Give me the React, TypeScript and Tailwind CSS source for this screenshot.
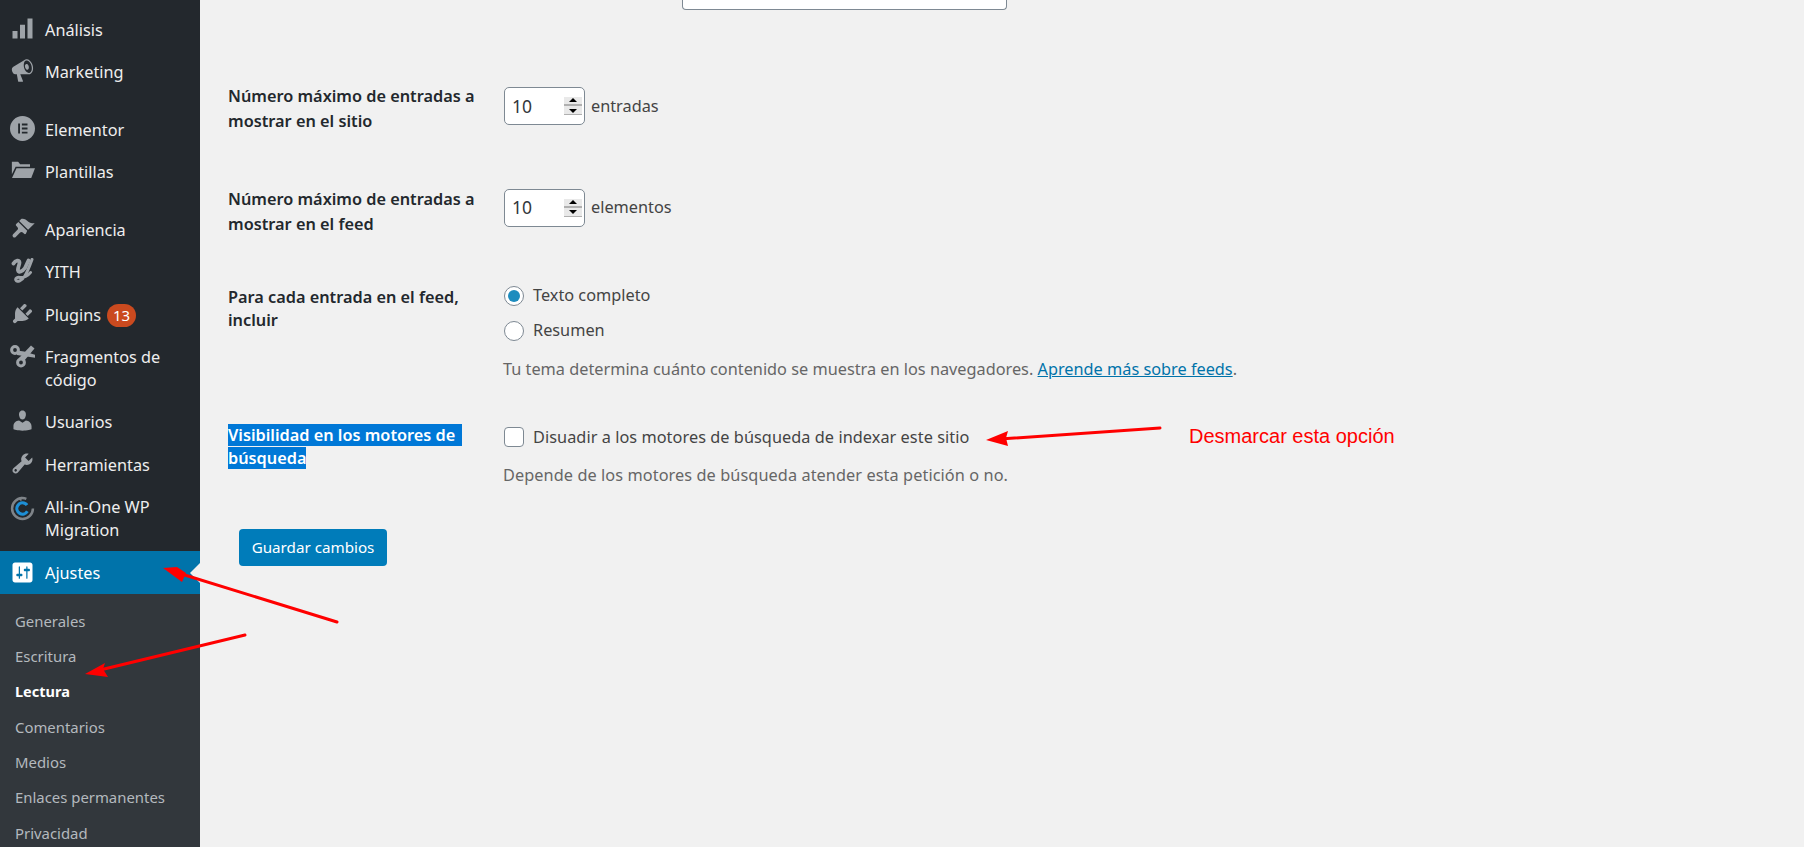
import React from "react";

const ICON = "#9ea3a8";

function Dash({ d, fill = ICON }: { d: string; fill?: string }) {
  return (
    <svg viewBox="0 0 20 20" className="w-[25px] h-[25px]" fill={fill}>
      <path d={d} />
    </svg>
  );
}

const icons: Record<string, React.ReactNode> = {
  chart: <Dash d="M18 18V2h-4v16h4zm-6 0V7H8v11h4zm-6 0v-6H2v6h4z" />,
  megaphone: (
    <Dash d="M18.15 5.94c.46 1.62.38 3.22-.02 4.48-.42 1.28-1.26 2.18-2.3 2.48-.16.06-.26.06-.4.06-.06.02-.12.02-.18.02-.06.02-.14.02-.22.02h-6.8l2.22 5.5c.02.14-.06.26-.14.34-.08.1-.24.16-.34.16H6.95c-.1 0-.26-.06-.34-.16-.08-.08-.16-.2-.14-.34l-1-5.5H4.25l-.02-.02c-.5.06-1.08-.18-1.54-.62s-.88-1.08-1.06-1.88c-.24-.8-.2-1.56-.02-2.2.2-.62.58-1.08 1.06-1.3l.02-.02 9-5.4c.1-.06.18-.1.24-.16.06-.04.14-.08.24-.12.16-.08.28-.12.5-.18 1.04-.3 2.24.1 3.22 1s1.84 2.24 2.26 3.86zm-2.58 5.98h-.02c.4-.1.74-.34 1.04-.7.58-.7.86-1.76.86-3.04 0-.64-.1-1.3-.28-1.98-.34-1.36-1.02-2.5-1.78-3.24s-1.68-1.1-2.46-.88c-.82.22-1.4.96-1.7 2-.32 1.04-.28 2.36.06 3.72.38 1.36 1 2.5 1.8 3.24.78.74 1.62 1.1 2.48.88zm-2.54-7.08c.22-.04.42-.02.62.04.38.16.76.48 1.02 1s.42 1.2.42 1.78c0 .3-.04.56-.12.8-.18.48-.44.84-.86.94-.34.1-.8-.06-1.14-.4-.34-.32-.66-.86-.84-1.48-.4-1.24-.16-2.42.9-2.68z" />
  ),
  elementor: (
    <svg viewBox="0 0 20 20" className="w-[25px] h-[25px]" fill={ICON}>
      <path
        fillRule="evenodd"
        d="M10 0a10 10 0 1 0 0 20a10 10 0 0 0 0-20ZM6.5 6H8v8H6.5ZM9.5 6H14v1.5H9.5ZM9.5 9.25H14v1.5H9.5ZM9.5 12.5H14V14H9.5Z"
      />
    </svg>
  ),
  folder: (
    <svg viewBox="0 0 20 20" className="w-[25px] h-[25px]" fill={ICON}>
      <path d="M1.5 3h5l1.6 2H16v2H4.5L1.5 13Z" />
      <path d="M5.2 8.2H20l-3 7.8H1.6Z" />
    </svg>
  ),
  brush: (
    <Dash d="M14.48 11.06L7.41 3.99l1.5-1.5c.5-.56 2.3-.47 3.51.32 1.21.8 1.43 1.28 2.91 2.1 1.18.64 2.45 1.26 4.45.85zm-.71.71L6.7 4.7 4.93 6.47c-.39.39-.39 1.02 0 1.41l1.06 1.06c.59.6.59 1.56 0 2.12l-3.53 3.53c-.6.59-.6 1.55 0 2.12.59.6 1.56.6 2.12 0l3.53-3.53c.59-.59 1.53-.59 2.12 0l1.06 1.06c.39.39 1.02.39 1.41 0z" />
  ),
  yith: (
    <svg viewBox="0 0 25 25" className="w-[25px] h-[25px]" fill="none" stroke={ICON} strokeLinecap="round">
      <path d="M3.5 5.5C5.5 2 9.5 1.5 9.5 4.5C9.5 7 7.5 10 8 12.5C8.5 15 12.5 13.5 15 10L18.5 2.5" strokeWidth="3.8" />
      <path d="M22 1.5C20 7 17.5 14 14.5 18.5C12 22.5 7 25 5.8 22C5.2 20 7.5 19 10 19.5C13.5 20 18 18 20.5 14.5" strokeWidth="3" />
    </svg>
  ),
  plug: (
    <Dash d="M13.11 4.36L9.87 7.6 8 5.73l3.24-3.24c.35-.34 1.05-.2 1.56.32.52.51.66 1.21.31 1.55zm-8 1.77l.91-1.12 9.01 9.01-1.19.84c-.71.71-2.63 1.16-3.82 1.16H6.14L4.9 17.26c-.59.59-1.54.59-2.12 0-.59-.58-.59-1.53 0-2.12l1.24-1.24v-3.88c0-1.13.4-3.19 1.09-3.89zm7.26 3.97l3.24-3.24c.34-.35 1.04-.21 1.55.31.52.51.66 1.21.31 1.55l-3.24 3.25z" />
  ),
  cut: (
    <svg viewBox="6 3 25 25" className="w-[25px] h-[25px] -mt-[3px]" fill={ICON}>
      <circle cx="11" cy="10" r="3.4" fill="none" stroke={ICON} strokeWidth="3" />
      <circle cx="17" cy="22.5" r="3.4" fill="none" stroke={ICON} strokeWidth="3" />
      <path d="M15 18L27 5.5l3.5 3L20 21Z" />
      <path d="M13 10.5l7 1L32 15v3L13 15Z" />
    </svg>
  ),
  user: (
    <Dash d="M10 9.25c-2.27 0-2.73-3.44-2.73-3.44C7 4.02 7.82 2 9.97 2c2.16 0 2.98 2.02 2.71 3.81 0 0-.41 3.44-2.68 3.44zm0 2.57L12.72 10c2.39 0 4.52 2.33 4.52 4.53v2.49s-3.65 1.13-7.24 1.13c-3.65 0-7.24-1.13-7.24-1.13v-2.49c0-2.25 1.94-4.48 4.47-4.48z" />
  ),
  wrench: (
    <Dash d="M16.68 9.77c-1.34 1.34-3.3 1.67-4.95.99l-5.41 6.52c-.99.99-2.59.99-3.58 0s-.99-2.59 0-3.57l6.52-5.42c-.68-1.65-.35-3.61.99-4.95 1.28-1.28 3.12-1.62 4.72-1.06l-2.89 2.89 2.82 2.82 2.86-2.87c.53 1.58.18 3.39-1.08 4.67zM3.81 16.21c.4.39 1.04.39 1.43 0 .4-.4.4-1.04 0-1.43-.39-.4-1.03-.4-1.43 0-.39.39-.39 1.03 0 1.43z" />
  ),
  aio: (
    <svg viewBox="0 0 24 24" className="w-[25px] h-[25px]" fill="none">
      <circle cx="12" cy="12" r="10" stroke="#7f8489" strokeWidth="2.4" strokeDasharray="50.6 12.2" />
      <path d="M11 0.5L7 2.6L11 5Z" fill="#7f8489" />
      <circle cx="12" cy="12" r="5.4" stroke="#1d8fd6" strokeWidth="3" strokeDasharray="27 7" transform="rotate(30 12 12)" />
    </svg>
  ),
  settings: (
    <Dash
      fill="#ffffff"
      d="M18 16V4c0-1.1-.9-2-2-2H4c-1.1 0-2 .9-2 2v12c0 1.1.9 2 2 2h12c1.1 0 2-.9 2-2zM8 11h1c.55 0 1 .45 1 1s-.45 1-1 1H8v1.5c0 .28-.22.5-.5.5s-.5-.22-.5-.5V13H6c-.55 0-1-.45-1-1s.45-1 1-1h1V5.5c0-.28.22-.5.5-.5s.5.22.5.5V11zm5-2h-1c-.55 0-1-.45-1-1s.45-1 1-1h1V5.5c0-.28.22-.5.5-.5s.5.22.5.5V7h1c.55 0 1 .45 1 1s-.45 1-1 1h-1v5.5c0 .28-.22.5-.5.5s-.5-.22-.5-.5V9z"
    />
  ),
};

function MenuItem({ icon, children, multi, height }: { icon: string; children: React.ReactNode; multi?: boolean; height?: string }) {
  return (
    <li className={`flex pl-[10px] ${multi ? `${height ?? "h-[65px]"} pt-[9px]` : "h-[42.5px] items-center"}`}>
      <span className={`w-[35px] shrink-0 flex ${multi ? "" : "mb-[4px]"}`}>{icons[icon]}</span>
      <span className="text-[16.25px] leading-[23px] text-[#eeeeee]">{children}</span>
    </li>
  );
}

function NumberField({ unit }: { unit: string }) {
  return (
    <div className="mt-[7px] flex items-center gap-[6px]">
      <div className="w-[81px] h-[38px] bg-white border border-[#7e8993] rounded-[5px] flex items-center justify-between pl-[7px] pr-[2px]">
        <span className="text-[17.5px] text-[#32373c]">10</span>
        <span className="w-[18px] h-[18px] flex flex-col bg-[#e9e9e9] border-b border-[#b0b0b0] items-center justify-around">
          <span className="w-0 h-0 border-x-[4px] border-x-transparent border-b-[4px] border-b-black" />
          <span className="w-full h-[2px] bg-[#b0b0b0]" />
          <span className="w-0 h-0 border-x-[4px] border-x-transparent border-t-[4px] border-t-black" />
        </span>
      </div>
      <span className="text-[#444444]">{unit}</span>
    </div>
  );
}

function Radio({ checked, label }: { checked?: boolean; label: string }) {
  return (
    <div className="flex items-center gap-[9px] h-[20px]">
      <span className="w-[20px] h-[20px] rounded-full bg-white border border-[#7e8993] flex items-center justify-center">
        {checked && <span className="w-[12px] h-[12px] rounded-full bg-[#1e8cbe]" />}
      </span>
      <span>{label}</span>
    </div>
  );
}

export default function App() {
  return (
    <div className="relative h-[847px] overflow-hidden flex bg-[#f1f1f1] font-['Noto_Sans',sans-serif]">
      <aside className="w-[200px] shrink-0 bg-[#23282d] flex flex-col">
        <ul className="pt-[9px] shrink-0">
          <MenuItem icon="chart">Análisis</MenuItem>
          <MenuItem icon="megaphone">Marketing</MenuItem>
          <li className="h-[15px]" />
          <MenuItem icon="elementor">Elementor</MenuItem>
          <MenuItem icon="folder">Plantillas</MenuItem>
          <li className="h-[15px]" />
          <MenuItem icon="brush">Apariencia</MenuItem>
          <MenuItem icon="yith">YITH</MenuItem>
          <MenuItem icon="plug">
            <span className="flex items-center gap-[6px]">
              Plugins
              <span className="w-[29px] h-[23px] rounded-full bg-[#ca4a1f] text-white text-[15px] flex items-center justify-center">13</span>
            </span>
          </MenuItem>
          <MenuItem icon="cut" multi>Fragmentos de código</MenuItem>
          <MenuItem icon="user">Usuarios</MenuItem>
          <MenuItem icon="wrench">Herramientas</MenuItem>
          <MenuItem icon="aio" multi height="h-[64px]">All-in-One WP Migration</MenuItem>
        </ul>
        <div className="relative shrink-0 h-[43px] bg-[#0073aa] flex items-center pl-[10px]">
          <span className="w-[35px] shrink-0 flex">{icons.settings}</span>
          <span className="pt-[3px] text-[16.25px] text-white">Ajustes</span>
          <span className="absolute right-0 top-[12px] w-0 h-0 border-y-[10px] border-y-transparent border-r-[10px] border-r-[#f1f1f1]" />
        </div>
        <ul className="flex-1 min-h-0 overflow-hidden bg-[#32373c] pt-[10px] pl-[15px] text-[14.9px] text-[#b4b9be]">
          <li className="h-[35.3px] flex items-center">Generales</li>
          <li className="h-[35.3px] flex items-center">Escritura</li>
          <li className="h-[35.3px] flex items-center font-bold text-[14.5px] text-white">Lectura</li>
          <li className="h-[35.3px] flex items-center">Comentarios</li>
          <li className="h-[35.3px] flex items-center">Medios</li>
          <li className="h-[35.3px] flex items-center">Enlaces permanentes</li>
          <li className="h-[35px] flex items-center">Privacidad</li>
        </ul>
      </aside>

      <main className="flex-1 pl-[28px] text-[16.3px] text-[#444444]">
        <div className="ml-[454px] w-[325px] h-[10px] bg-white border-x border-b border-[#7e8993] rounded-b-[4px]" />

        <div className="mt-[70px] flex items-start">
          <div className="w-[276px] pt-[4px] font-semibold text-[#23282d] leading-[25px]">Número máximo de entradas a mostrar en el sitio</div>
          <NumberField unit="entradas" />
        </div>

        <div className="mt-[47.5px] flex items-start">
          <div className="w-[276px] pt-[5px] font-semibold text-[#23282d] leading-[25px]">Número máximo de entradas a mostrar en el feed</div>
          <NumberField unit="elementos" />
        </div>

        <div className="mt-[49px] flex">
          <div className="w-[276px] font-semibold text-[#23282d] leading-[23px]">Para cada entrada en el feed, incluir</div>
          <div className="flex flex-col gap-[15px]">
            <Radio checked label="Texto completo" />
            <Radio label="Resumen" />
            <p className="mt-[1px] -ml-[1px] text-[#666666]">
              Tu tema determina cuánto contenido se muestra en los navegadores.{" "}
              <a className="text-[#0073aa] underline">Aprende más sobre feeds</a>.
            </p>
          </div>
        </div>

        <div className="mt-[43px] flex">
          <div className="w-[276px] font-semibold text-white leading-[23px]">
            <span className="bg-[#0078d7] pr-[2px]">Visibilidad en los motores de&nbsp;</span>
            <br />
            <span className="bg-[#0078d7]">búsqueda</span>
          </div>
          <div className="flex flex-col">
            <div className="mt-[2px] flex items-center gap-[9px] h-[22px]">
              <span className="w-[20px] h-[20px] rounded-[4px] bg-white border border-[#7e8993]" />
              <span className="tracking-[0.05px]">Disuadir a los motores de búsqueda de indexar este sitio</span>
            </div>
            <p className="mt-[15px] -ml-[1px] text-[#666666] tracking-[0.08px]">Depende de los motores de búsqueda atender esta petición o no.</p>
          </div>
        </div>

        <button className="mt-[42px] ml-[11px] w-[148px] h-[37px] rounded-[4px] bg-[#007cba] text-white text-[15.2px]">Guardar cambios</button>
      </main>

      <svg className="absolute inset-0 pointer-events-none" width="1804" height="847" fill="#ff0000" stroke="none">
        <line x1="337" y1="622" x2="175" y2="572" stroke="#ff0000" strokeWidth="3" strokeLinecap="round" />
        <polygon points="163,568 177,567 186,573 182,582" />
        <line x1="245" y1="635" x2="100" y2="670" stroke="#ff0000" strokeWidth="3" strokeLinecap="round" />
        <polygon points="85,674 105,663 103,669 108,677" />
        <line x1="1160" y1="428" x2="1000" y2="439" stroke="#ff0000" strokeWidth="3" strokeLinecap="round" />
        <polygon points="986,440 1008,431 1006,438 1008,446" />
      </svg>
      <span className="absolute left-[1189px] top-[423px] text-[20px] leading-[26px] text-[#ff0000] font-['Liberation_Sans',sans-serif]">Desmarcar esta opción</span>
    </div>
  );
}
